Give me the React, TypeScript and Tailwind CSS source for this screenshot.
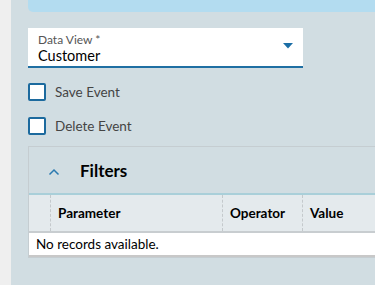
export default function App() {
  return (
    <div className="flex h-[285px] w-[375px] overflow-hidden bg-[#efefef] font-['Lato',sans-serif] text-[#222]">
      <div className="w-[11px] shrink-0" />
      <div className="flex-1 overflow-hidden bg-[#d1dde2]">
        <div className="ml-[17px] h-[12px] rounded-bl-[5px] bg-[#b3dcf0]" />
        <div className="pl-[17px]">
          <DataView />
          <div className="mt-[15px] flex flex-col gap-[16px]">
            <Check label="Save Event" />
            <Check label="Delete Event" />
          </div>
          <Filters />
        </div>
      </div>
    </div>
  );
}

function DataView() {
  return (
    <div className="mt-[16px] flex h-[40px] w-[275px] items-center justify-between border-b-2 border-[#1f6fa3] bg-white pl-[10px] pr-[10px]">
      <div className="flex flex-col pt-[4px]">
        <span className="text-[12px] leading-[14px] text-[#555]">Data View *</span>
        <span className="text-[14.5px] leading-[18px] text-black">Customer</span>
      </div>
      <svg width="10" height="6" viewBox="0 0 10 6" className="mb-[2px]">
        <path d="M0 0 H10 L5 5.5 Z" fill="#1b6ea6" />
      </svg>
    </div>
  );
}

function Check({ label }: { label: string }) {
  return (
    <label className="flex h-[18px] items-center gap-[9px]">
      <span className="h-[18px] w-[18px] rounded-[2px] border-2 border-[#1c6a9e] bg-white" />
      <span className="text-[13.5px] leading-[18px] text-[#444]">{label}</span>
    </label>
  );
}

function Filters() {
  return (
    <div className="mt-[11px] w-[360px] border border-[#c5cdd1]">
      <div className="flex h-[48px] items-center border-b-2 border-[#a9cfd9] pl-[19px] pt-[2px]">
        <svg width="12" height="8" viewBox="0 0 12 8" className="mt-[1px]">
          <path d="M1.5 6.5 L6 2 L10.5 6.5" fill="none" stroke="#2a79b0" strokeWidth="1.5" />
        </svg>
        <span className="ml-[20px] text-[17px] font-bold text-black">Filters</span>
      </div>
      <div className="flex h-[38px] items-center border-b-2 border-[#c8cdd0] bg-[#e4eaed] text-[13.5px] font-bold text-black">
        <div className="h-full w-[22px] border-r border-dashed border-[#c4c9cc]" />
        <div className="flex h-full w-[172px] items-center border-r border-dashed border-[#c4c9cc] pl-[7px]">Parameter</div>
        <div className="flex h-full w-[80px] items-center border-r border-dashed border-[#c4c9cc] pl-[7px]">Operator</div>
        <div className="flex h-full flex-1 items-center pl-[7px]">Value</div>
      </div>
      <div className="flex h-[24px] items-center border-b-2 border-[#c8c8c8] bg-white pl-[7px] pt-[1px] text-[13.5px] text-black">
        No records available.
      </div>
    </div>
  );
}
